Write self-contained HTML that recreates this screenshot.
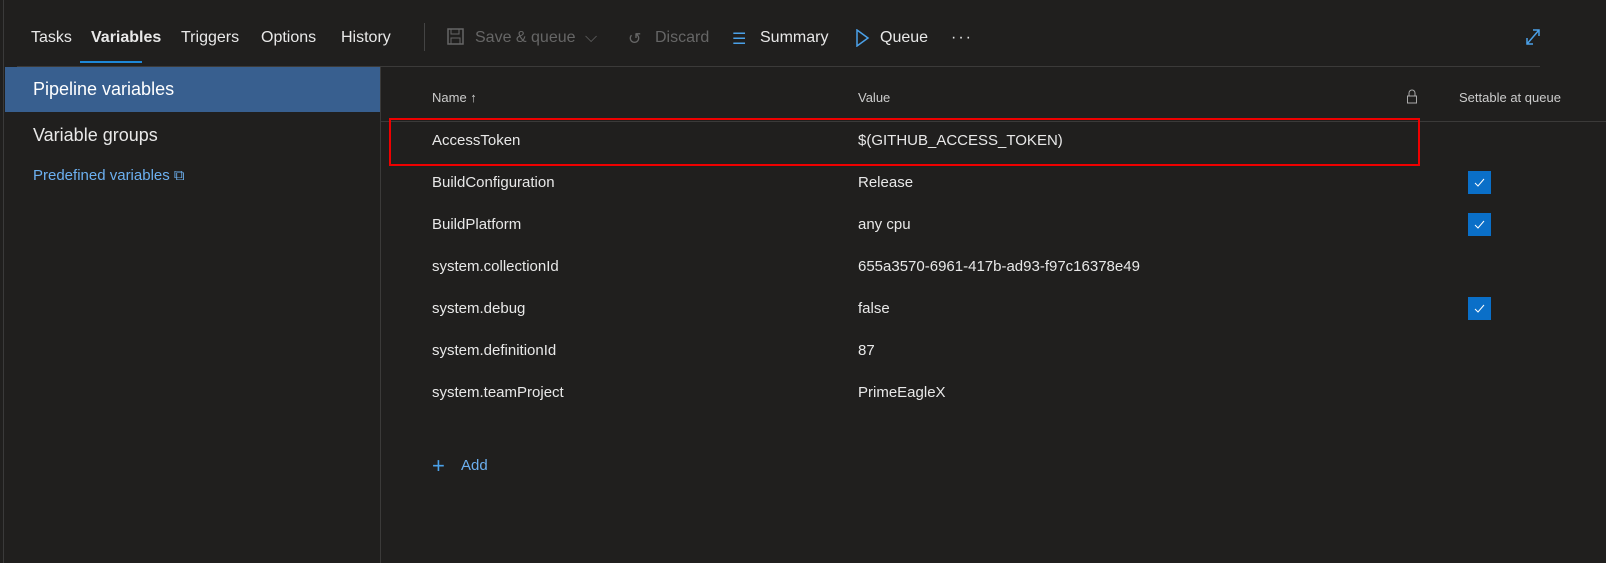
<!DOCTYPE html><html><head><style>
body{margin:0;width:1606px;height:563px;background:#201f1e;font-family:"Liberation Sans",sans-serif;color:#e8e8e8;position:relative;overflow:hidden}
.a{position:absolute;white-space:nowrap}
.t{font-size:16px;top:29px}
.r{font-size:15px}
.cb{position:absolute;left:1468px;width:23px;height:23px;background:#0a6fc8}
</style></head><body>
<div class="a" style="left:3px;top:0;width:1px;height:563px;background:#3a3a3a"></div>
<div class="a t" style="left:31px">Tasks</div>
<div class="a t" style="left:91px;font-weight:bold">Variables</div>
<div class="a" style="left:80px;top:61px;width:62px;height:2px;background:#1e88d8"></div>
<div class="a t" style="left:181px">Triggers</div>
<div class="a t" style="left:261px">Options</div>
<div class="a t" style="left:341px">History</div>
<div class="a" style="left:424px;top:23px;width:1px;height:28px;background:#444"></div>
<svg class="a" style="left:447px;top:28px" width="18" height="18"><rect x="1" y="1" width="15" height="15" fill="none" stroke="#666" stroke-width="1.5"/><rect x="4" y="1" width="8" height="5" fill="none" stroke="#666"/><rect x="4" y="10" width="9" height="6" fill="none" stroke="#666"/></svg>
<div class="a t" style="left:475px;color:#666">Save &amp; queue</div>
<div class="a t" style="left:585px;color:#666">⌵</div>
<div class="a t" style="left:628px;color:#666">↺</div>
<div class="a t" style="left:655px;color:#666">Discard</div>
<div class="a t" style="left:732px;color:#4aa0e8">☰</div>
<div class="a t" style="left:760px">Summary</div>
<svg class="a" style="left:856px;top:29px" width="14" height="18"><path d="M1 1 L12 9 L1 17 Z" fill="none" stroke="#4aa0e8" stroke-width="1.5"/></svg>
<div class="a t" style="left:880px">Queue</div>
<div class="a t" style="left:951px;letter-spacing:2px">···</div>
<svg class="a" style="left:1525px;top:28px" width="16" height="18"><path d="M2 16 L14 2 M8 2 H14 V8 M2 10 V16 H8" fill="none" stroke="#4aa0e8" stroke-width="1.5"/></svg>
<div class="a" style="left:17px;top:66px;width:1523px;height:1px;background:#3b3a39"></div>
<div class="a" style="left:5px;top:67px;width:375px;height:45px;background:#385f8f"></div>
<div class="a" style="left:380px;top:67px;width:1px;height:496px;background:#3b3a39"></div>
<div class="a" style="left:33px;top:79px;font-size:18px;color:#fff">Pipeline variables</div>
<div class="a" style="left:33px;top:125px;font-size:18px">Variable groups</div>
<div class="a" style="left:33px;top:167px;font-size:15px;color:#6cb0f0">Predefined variables ⧉</div>
<div class="a" style="left:432px;top:90px;font-size:13px;color:#ccc">Name ↑</div>
<div class="a" style="left:858px;top:90px;font-size:13px;color:#ccc">Value</div>
<svg class="a" style="left:1406px;top:89px" width="12" height="15"><path d="M3 7 V4 A3 3 0 0 1 9 4 V7" fill="none" stroke="#aaa"/><rect x="1.5" y="7" width="9" height="7" fill="none" stroke="#aaa"/></svg>
<div class="a" style="left:1459px;top:90px;font-size:13px;color:#ccc">Settable at queue</div>
<div class="a" style="left:381px;top:121px;width:1225px;height:1px;background:#3b3a39"></div>
<div class="a" style="left:389px;top:118px;width:1027px;height:44px;border:2px solid #e00"></div>
<div class="a r" style="left:432px;top:132px">AccessToken</div><div class="a r" style="left:858px;top:132px">$(GITHUB_ACCESS_TOKEN)</div>
<div class="a r" style="left:432px;top:174px">BuildConfiguration</div><div class="a r" style="left:858px;top:174px">Release</div>
<div class="a r" style="left:432px;top:216px">BuildPlatform</div><div class="a r" style="left:858px;top:216px">any cpu</div>
<div class="a r" style="left:432px;top:258px">system.collectionId</div><div class="a r" style="left:858px;top:258px">655a3570-6961-417b-ad93-f97c16378e49</div>
<div class="a r" style="left:432px;top:300px">system.debug</div><div class="a r" style="left:858px;top:300px">false</div>
<div class="a r" style="left:432px;top:342px">system.definitionId</div><div class="a r" style="left:858px;top:342px">87</div>
<div class="a r" style="left:432px;top:384px">system.teamProject</div><div class="a r" style="left:858px;top:384px">PrimeEagleX</div>
<div class="cb" style="top:171px"></div><div class="cb" style="top:213px"></div><div class="cb" style="top:297px"></div>
<svg class="a" style="left:1468px;top:171px" width="23" height="150"><path d="M7 12 L10 15 L16 8 M7 54 L10 57 L16 50 M7 138 L10 141 L16 134" fill="none" stroke="#fff" stroke-width="1"/></svg>
<div class="a" style="left:432px;top:453px;font-size:22px;color:#4aa0e8;font-weight:300">+</div>
<div class="a r" style="left:461px;top:457px;color:#6cb0f0">Add</div>
</body></html>
